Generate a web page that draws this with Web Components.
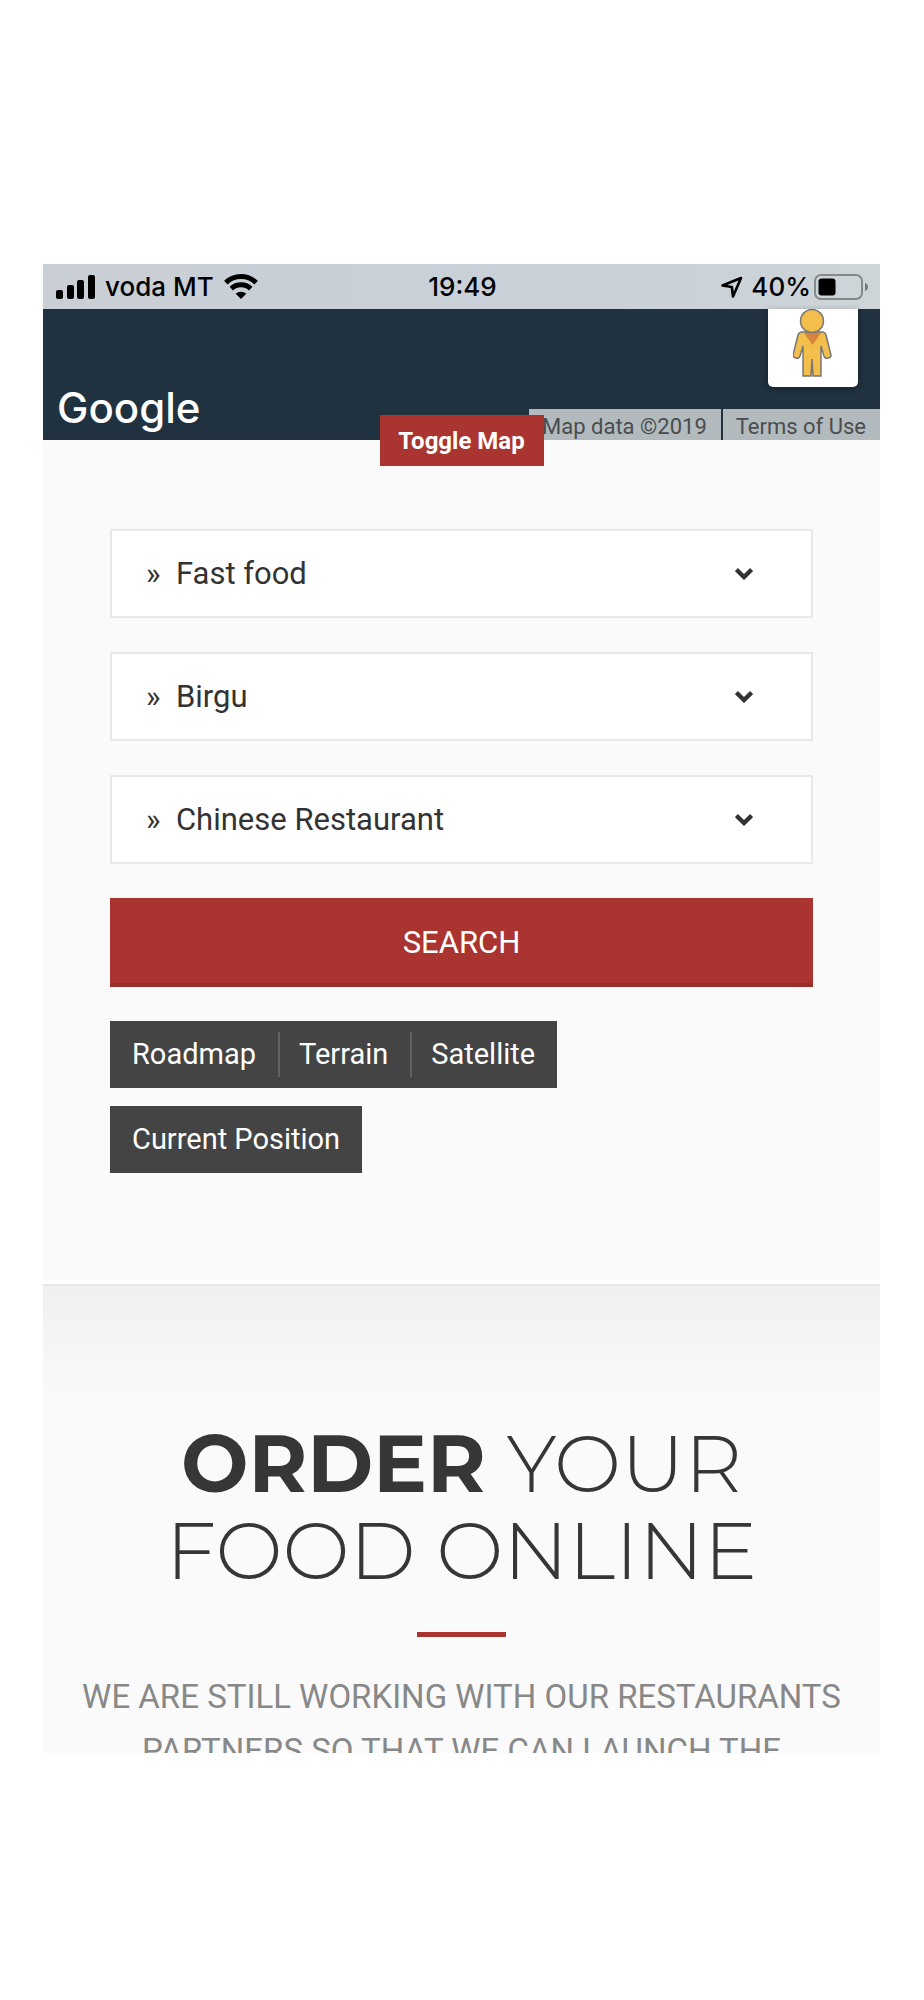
<!DOCTYPE html>
<html lang="en">
<head>
<meta charset="utf-8">
<meta name="viewport" content="width=device-width">
<title>Order your food online</title>
<style>
body { margin: 0; background: #fff; font-family: Roboto, sans-serif; color: #333; }
</style>
</head>
<body>
<phone-screen>
  <status-bar carrier="voda MT" time="19:49" battery="40%"></status-bar>
  <map-strip></map-strip>
  <search-panel>
    <filter-select label="Cuisine" value="Fast food"></filter-select>
    <filter-select label="Town" value="Birgu"></filter-select>
    <filter-select label="Restaurant type" value="Chinese Restaurant"></filter-select>
    <search-button>SEARCH</search-button>
    <map-controls></map-controls>
  </search-panel>
  <order-section>
    <span slot="lead">ORDER</span>
    <span slot="title">YOUR</span>
    <span slot="title-end">FOOD ONLINE</span>
    <span slot="text">WE ARE STILL WORKING WITH OUR RESTAURANTS PARTNERS SO THAT WE CAN LAUNCH THE</span>
  </order-section>
</phone-screen>

<script>
const define = (name, html, setup) => {
  const template = document.createElement('template');
  template.innerHTML = html;
  customElements.define(name, class extends HTMLElement {
    constructor() {
      super();
      this.attachShadow({ mode: 'open' }).append(template.content.cloneNode(true));
    }
    connectedCallback() { if (setup) setup(this, this.shadowRoot); }
  });
};

define('phone-screen', `
<style>
:host { display: block; padding: 264px 44px 246px 43px; }
main { display: flex; flex-direction: column; background: #fafafa; overflow: hidden; }
</style>
<main><slot></slot></main>`);

define('status-bar', `
<style>
:host { display: grid; grid-template-columns: 1fr auto 1fr; align-items: center; height: 45px; padding: 0 11px 0 13px;
  background: linear-gradient(90deg, #c9cfd5, #c9d0d8 65%, #cdd5d8); color: #000; font: 500 26px/32px Inter, sans-serif; }
div { display: flex; align-items: center; }
.left { gap: 10px; }
.right { justify-content: flex-end; }
.arrow { margin-right: 8px; }
.battery { margin-left: 3px; }
svg { display: block; flex: none; }
</style>
<div class="left">
  <svg width="39" height="24" viewBox="0 0 39 24" aria-hidden="true"><rect x="0" y="15" width="7" height="9" rx="2"/><rect x="11" y="10" width="7" height="14" rx="2"/><rect x="21" y="5" width="7" height="19" rx="2"/><rect x="32" y="0" width="7" height="24" rx="2"/></svg>
  <span id="carrier"></span>
  <svg width="34" height="25" viewBox="0 0 34 25" aria-hidden="true"><g fill="none" stroke="#000" stroke-width="5"><path d="M1.8 8.6C10.5.5 23.5.5 32.200 8.600"/><path d="M7.300 14.600C12.800 9.500 21.200 9.500 26.700 14.600"/></g><path d="M17 25l-5.300-5.300c3-2.700 7.600-2.700 10.600 0z"/></svg>
</div>
<span id="time"></span>
<div class="right">
  <svg class="arrow" width="22" height="22" viewBox="0 0 22 22" aria-hidden="true"><path d="M1.500 9.500L20 2 12 20.500 10.800 11z" fill="none" stroke="#000" stroke-width="2.600" stroke-linejoin="round"/></svg>
  <span id="battery"></span>
  <svg class="battery" width="55" height="26" viewBox="0 0 55 26" aria-hidden="true"><rect x="1" y="1" width="47" height="24" rx="6" fill="none" stroke="#85898c" stroke-width="2"/><rect x="4.500" y="4.500" width="17" height="17" rx="3"/><path d="M51 9c4 1 4 7 0 8z" fill="#777b7e"/></svg>
</div>`, (host, root) => {
  for (const id of ['carrier', 'time', 'battery']) root.getElementById(id).textContent = host.getAttribute(id);
});

define('map-strip', `
<style>
:host { display: block; position: relative; z-index: 1; }
.map { display: flex; align-items: flex-end; justify-content: space-between; height: 131px; background: #20313f; overflow: hidden; }
.logo { padding: 0 0 4px 14px; color: #fff; font: 500 42px/56px Inter, sans-serif; text-decoration: none; }
.legal { display: flex; gap: 2px; font-size: 22px; line-height: 31px; color: #4a4d4f; }
.legal > * { padding: 2px 14px 0 13px; height: 31px; box-sizing: border-box; line-height: 31px; background: #b3babd; color: inherit; text-decoration: none; }
.peg { position: absolute; top: 0; right: 22px; display: flex; align-items: flex-start; justify-content: center; width: 90px; height: 78px; padding: 0; border: 0; border-radius: 0 0 5px 5px; background: #fff; box-shadow: 0 2px 6px #0005; }
.peg svg { display: block; }
.toggle { position: absolute; top: 106px; left: 50%; transform: translateX(-50%); height: 51px; width: 164px; padding: 0; border: 0; background: #aa3430; color: #fff; font: 700 24px/48px Roboto, sans-serif; white-space: nowrap; }
</style>
<div class="map">
  <a class="logo" href="#">Google</a>
  <div class="legal"><span>Map data ©2019</span><a href="#">Terms of Use</a></div>
</div>
<button class="peg" aria-label="Street View">
  <svg width="40" height="68" viewBox="1 0 40 68" aria-hidden="true"><path d="M10 23h20q3 0 4 3l5 20q0 3-3 3-3 1-4-2l-3-10v30H21l-1-17-1 17h-8V37L8 47q-1 3-4 2-3 0-3-3l5-20q1-3 4-3z" fill="#f3be4b" stroke="#777" stroke-width="1.500"/><path d="M12 24h17l-8.500 12z" fill="#d5843d"/><circle cx="20" cy="12" r="11.500" fill="#f3be4b" stroke="#777" stroke-width="1.500"/></svg>
</button>
<button class="toggle">Toggle Map</button>`);

define('search-panel', `
<style>
:host { display: flex; flex-direction: column; gap: 34px; padding: 89px 67px 107px; border-bottom: 4px solid #fff; }
</style>
<slot></slot>`);

define('filter-select', `
<style>
:host { display: grid; align-items: center; }
select { grid-area: 1 / 1; appearance: none; width: 100%; height: 89px; margin: 0; padding: 0 90px 0 34px; border: 2px solid #e8e8e8; border-radius: 0; background: #fff; color: #333; font: 31px/40px Roboto, sans-serif; }
svg { grid-area: 1 / 1; justify-self: end; margin-right: 60px; pointer-events: none; z-index: 1; }
</style>
<select><option></option></select>
<svg width="18" height="12" viewBox="0 0 18 12" aria-hidden="true"><path d="M1.400 1.600L9 9l7.600-7.400" fill="none" stroke="#333" stroke-width="4.400"/></svg>`, (host, root) => {
  root.querySelector('select').setAttribute('aria-label', host.getAttribute('label'));
  root.querySelector('option').textContent = '»\u00a0\u00a0' + host.getAttribute('value');
});

define('search-button', `
<style>
:host { display: block; }
button { display: block; width: 100%; height: 89px; padding: 0; border: 0; box-shadow: inset 0 -4px #992f2b; background: #aa3430; color: #fff; font: 31px/40px Roboto, sans-serif; }
</style>
<button><slot></slot></button>`);

define('map-controls', `
<style>
:host { display: flex; flex-direction: column; align-items: flex-start; gap: 18px; }
div { display: flex; align-items: center; background: #444; height: 67px; }
button { height: 45px; padding: 0 22px 2px 19px; border: 0; border-left: 2px solid #626262; background: none; color: #fff; font: 29px/40px Roboto, sans-serif; }
button:first-child { border-left: 0; padding-left: 22px; }
</style>
<div><button>Roadmap</button><button>Terrain</button><button>Satellite</button></div>
<div><button>Current Position</button></div>`);

define('order-section', `
<style>
:host { display: flex; flex-direction: column; align-items: center; padding: 134px 30px 0; border-top: 2px solid #e8e8e8; background: linear-gradient(#f0f0f0, #fafafa 115px); text-align: center; }
h2 { margin: 0; color: #363636; font: 300 80px/87px Montserrat, Inter, sans-serif; max-width: 640px; }
strong { font-weight: 700; }
hr { width: 89px; height: 5px; margin: 38px 0 33px; border: 0; background: #aa3430; }
p { margin: 0; height: 83px; overflow: hidden; font-size: 33px; line-height: 54px; color: #888; }
</style>
<h2><strong><slot name="lead"></slot></strong> <slot name="title"></slot> <slot name="title-end"></slot></h2>
<hr>
<p><slot name="text"></slot></p>`);
</script>
</body>
</html>
